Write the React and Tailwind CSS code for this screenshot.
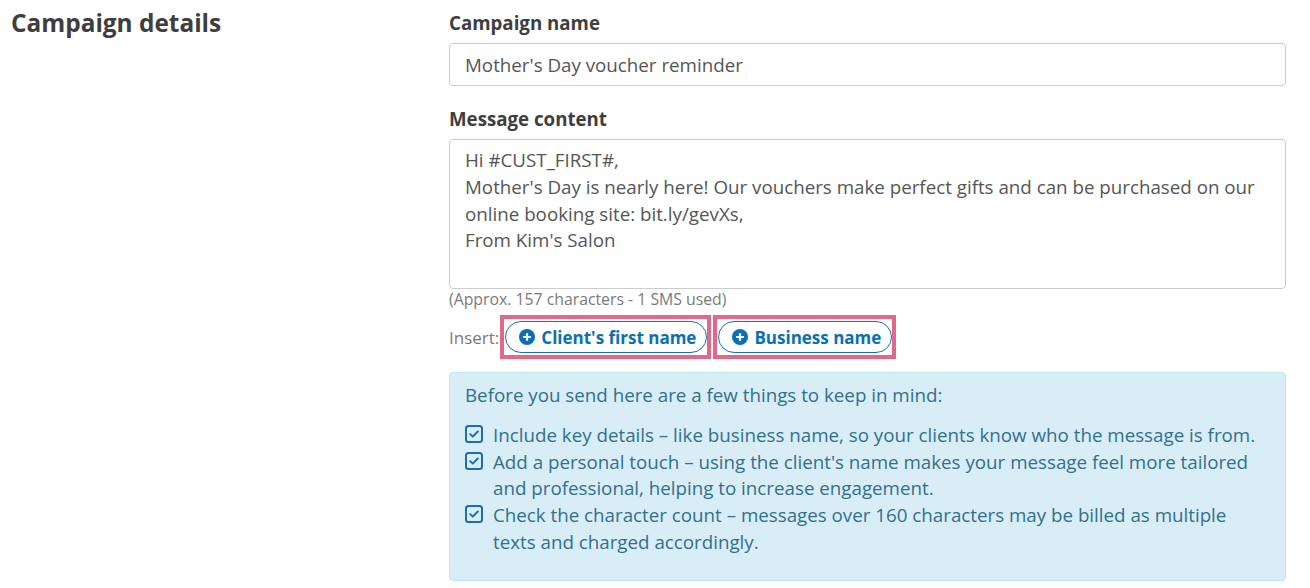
import React from 'react';

const CheckIcon = () => (
  <svg width="18" height="18" viewBox="0 0 18 18" className="shrink-0 mt-[3px]">
    <rect x="1" y="1" width="16" height="16" rx="2.5" fill="none" stroke="#1b6fae" strokeWidth="2" />
    <path d="M5.2 9.1 L7.8 11.6 L12.8 6.5" fill="none" stroke="#1b6fae" strokeWidth="2" strokeLinecap="round" strokeLinejoin="round" />
  </svg>
);

const PlusCircle = () => (
  <svg width="16" height="16" viewBox="0 0 16 16" className="shrink-0">
    <circle cx="8" cy="8" r="8" fill="#0b6fb3" />
    <path d="M8 4.2 V11.8 M4.2 8 H11.8" stroke="#fff" strokeWidth="2.2" />
  </svg>
);

const InsertButton = ({ label }) => (
  <div className="border-4 border-[#e0698a] py-[2px] pl-[1px] pr-0">
    <button
      type="button"
      className="h-[32px] flex items-center gap-[6px] pl-[13px] pr-[10px] rounded-full border border-[#1a72b5] bg-white text-[#0b6fb3] text-[17px] font-bold"
    >
      <PlusCircle />
      {label}
    </button>
  </div>
);

const tips = [
  'Include key details – like business name, so your clients know who the message is from.',
  "Add a personal touch – using the client's name makes your message feel more tailored and professional, helping to increase engagement.",
  'Check the character count – messages over 160 characters may be billed as multiple texts and charged accordingly.',
];

export default function App() {
  return (
    <div className="w-[1310px] h-[588px] bg-white flex font-['Open_Sans',sans-serif] overflow-hidden">
      {/* Left column */}
      <div className="w-[449px] pl-[11px] pt-[5px]">
        <h2 className="text-[24.4px] leading-[36px] font-bold text-[#3e3e3e]">Campaign details</h2>
      </div>

      {/* Right column */}
      <div className="w-[837px] pt-[10px]">
        <label className="block text-[18.7px] leading-[26.67px] font-bold text-[#3e3e3e] mb-[6px]">
          Campaign name
        </label>
        <div className="h-[43px] border border-[#cccccc] rounded-[4px] px-[15px] py-[8px] text-[18.75px] leading-[26.67px] text-[#555555]">
          Mother's Day voucher reminder
        </div>

        <label className="block mt-[20px] text-[18.7px] leading-[26.67px] font-bold text-[#3e3e3e] mb-[7px]">
          Message content
        </label>
        <div className="h-[150px] border border-[#cccccc] rounded-[4px] px-[15px] pt-[7px] text-[18.75px] leading-[26.67px] text-[#555555]">
          <div>Hi #CUST_FIRST#,</div>
          <div>Mother's Day is nearly here! Our vouchers make perfect gifts and can be purchased on our</div>
          <div>online booking site: bit.ly/gevXs,</div>
          <div>From Kim's Salon</div>
        </div>
        <p className="text-[15.8px] leading-[20px] text-[#7a7a7a]">(Approx. 157 characters - 1 SMS used)</p>

        <div className="mt-[6px] flex items-center gap-[2px]">
          <span className="text-[17px] text-[#7a7a7a] mr-[-1px]">Insert:</span>
          <InsertButton label="Client's first name" />
          <InsertButton label="Business name" />
        </div>

        <div className="mt-[13px] bg-[#d9edf7] border border-[#bce8f1] rounded-[4px] pl-[15px] pr-[16px] pt-[9px] pb-[25px] text-[18.75px] leading-[26.67px] text-[#31708f]">
          <p>Before you send here are a few things to keep in mind:</p>
          <ul className="mt-[13px]">
            {tips.map((t) => (
              <li key={t} className="flex gap-[10px]">
                <CheckIcon />
                <span>{t}</span>
              </li>
            ))}
          </ul>
        </div>
      </div>
    </div>
  );
}
